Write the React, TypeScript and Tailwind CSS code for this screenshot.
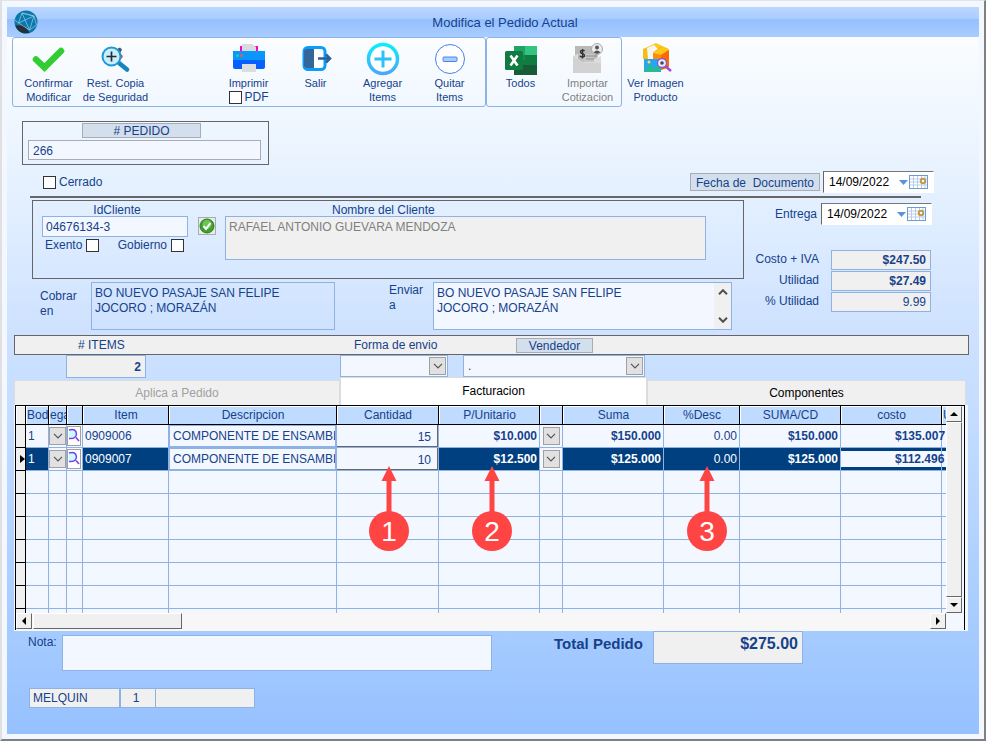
import React from 'react';
import clsx from 'clsx';

interface Row {
  bodega: string;
  item: string;
  descripcion: string;
  cantidad: string;
  precio: string;
  suma: string;
  desc: string;
  sumaCd: string;
  costo: string;
  selected?: boolean;
}

const rows: Row[] = [
  {
    bodega: '1',
    item: '0909006',
    descripcion: 'COMPONENTE DE ENSAMBLE',
    cantidad: '15',
    precio: '$10.000',
    suma: '$150.000',
    desc: '0.00',
    sumaCd: '$150.000',
    costo: '$135.007',
  },
  {
    bodega: '1',
    item: '0909007',
    descripcion: 'COMPONENTE DE ENSAMBLE',
    cantidad: '10',
    precio: '$12.500',
    suma: '$125.000',
    desc: '0.00',
    sumaCd: '$125.000',
    costo: '$112.496',
    selected: true,
  },
];

const columns = [
  { label: '', width: 'w-[10px]' },
  { label: 'Bod', width: 'w-[23px]' },
  { label: 'ega', width: 'w-[18px]' },
  { label: '', width: 'w-[16px]' },
  { label: 'Item', width: 'w-[86px]' },
  { label: 'Descripcion', width: 'w-[168px]' },
  { label: 'Cantidad', width: 'w-[102px]' },
  { label: 'P/Unitario', width: 'w-[101px]' },
  { label: '', width: 'w-[23px]' },
  { label: 'Suma', width: 'w-[101px]' },
  { label: '%Desc', width: 'w-[76px]' },
  { label: 'SUMA/CD', width: 'w-[101px]' },
  { label: 'costo', width: 'w-[101px]' },
  { label: 'Util', width: 'w-[30px]' },
];

const markers = [
  { n: '1', left: 'left-[354px]' },
  { n: '2', left: 'left-[457px]' },
  { n: '3', left: 'left-[672px]' },
];

function Globe() {
  return (
    <svg width="24" height="24" viewBox="0 0 24 24">
      <circle cx="12" cy="12" r="11.5" fill="#0b78ad" />
      <path d="M1.200 15.500l8-.5 6.500 7.500Q12 24 8 22.700 3 20.500 1.200 15.500z" fill="#26303c" />
      <path
        d="M8 3L4.500 13l11 7L20 6zM8 3l12 3M4.500 13L20 6M8 3l7.500 17M20 6l2.500 9-7 5M4.500 13L1 10"
        fill="none"
        stroke="#8cc4dd"
        strokeWidth=".8"
      />
    </svg>
  );
}

function CheckIcon() {
  return (
    <svg width="34" height="32" viewBox="0 0 34 32">
      <path d="M4 16.500l8.500 8L29 8" fill="none" stroke="#32cd32" strokeWidth="6.500" strokeLinecap="round" strokeLinejoin="miter" />
    </svg>
  );
}

function RestoreIcon() {
  return (
    <svg width="34" height="32" viewBox="0 0 34 32">
      <path d="M18 6l3-1.500 2 2-1.500 3z" fill="#45566b" />
      <circle cx="21.500" cy="13.500" r="2.200" fill="#f04438" />
      <path d="M20 20l8 6.500" stroke="#1585bd" strokeWidth="4.500" strokeLinecap="round" />
      <circle cx="12.500" cy="13.500" r="9" fill="#c9eefa" stroke="#1a9ad3" strokeWidth="2" />
      <path d="M12.500 8.500v10M7.500 13.500h10" stroke="#1f2d3a" strokeWidth="1.700" />
    </svg>
  );
}

function PrinterIcon() {
  return (
    <svg width="34" height="32" viewBox="0 0 34 32">
      <path d="M8 3h18v6H8z" fill="#ff00c8" />
      <path d="M10 1h10l4 3v5H10z" fill="#d9dade" />
      <path d="M1 8h32v10H1z" fill="#0a97fb" />
      <path d="M1 17h32v7a2 2 0 0 1-2 2H3a2 2 0 0 1-2-2z" fill="#0560ff" />
      <circle cx="5.500" cy="12.500" r="1.500" fill="#2fc3a0" />
      <circle cx="9.500" cy="12.500" r="1.500" fill="#f4574c" />
      <path d="M10 21h14v8H10z" fill="#dcdde1" />
    </svg>
  );
}

function ExitIcon() {
  return (
    <svg width="32" height="32" viewBox="0 0 32 32">
      <rect x="4" y="4.500" width="21" height="22" rx="4" fill="#fff" stroke="#0b9dfb" strokeWidth="3" />
      <path d="M4 9q0-3 3-3h7v19H7q-3 0-3-3z" fill="#336699" />
      <path d="M18 15.500h12M26 11.500l4 4-4 4" fill="none" stroke="#2b6196" strokeWidth="2.500" />
    </svg>
  );
}

function AddIcon() {
  return (
    <svg width="34" height="34" viewBox="0 0 34 34">
      <defs>
        <linearGradient id="add" x1="0" y1="0" x2="0" y2="1">
          <stop offset="0" stopColor="#08eefb" />
          <stop offset="1" stopColor="#4ba6fc" />
        </linearGradient>
      </defs>
      <circle cx="17" cy="17" r="14.500" fill="#fff" stroke="url(#add)" strokeWidth="3.500" />
      <path d="M15.500 8.500h3v7h7v3h-7v7h-3v-7h-7v-3h7z" fill="#2bc2fb" />
    </svg>
  );
}

function RemoveIcon() {
  return (
    <svg width="32" height="34" viewBox="0 0 32 34">
      <circle cx="16" cy="17" r="14.500" fill="#fff" stroke="#3f83f0" />
      <rect x="9" y="15" width="14" height="4.500" rx="1" fill="#a9cbff" stroke="#4587ee" />
    </svg>
  );
}

function ExcelIcon() {
  return (
    <svg width="34" height="34" viewBox="0 0 34 34">
      <path d="M10 4h11v10H10z" fill="#21a366" />
      <path d="M21 4h12v10H21z" fill="#33c481" />
      <path d="M10 13h23v10H10z" fill="#107c41" />
      <path d="M10 13h11v5H10z" fill="#178a4c" />
      <path d="M10 23h23v10H10z" fill="#185c37" />
      <rect x="1" y="9" width="18" height="19" rx="1.500" fill="#107c41" />
      <path d="M6.500 13.500l7 10M13.500 13.500l-7 10" stroke="#fff" strokeWidth="2.600" />
    </svg>
  );
}

function ImportIcon() {
  return (
    <svg width="36" height="34" viewBox="0 0 36 34">
      <path d="M5 4h22v19H5z" fill="#b9b9b9" />
      <path d="M3 14l5-2v8h16v-3l7-3v17H3z" fill="#dcdcdc" />
      <path d="M3 14l12 7h16v10H3z" fill="#d2d2d2" />
      <path d="M8 12h16v8H14z" fill="#c6c6c6" />
      <path d="M16 14h12M16 17h8" stroke="#8e8e8e" />
      <path d="M14.500 9.200c-1-1.500-4.500-1-4 1s4 1.200 4 3.200-4 2-4.500.3M12.500 7v9.500" fill="none" stroke="#333" strokeWidth="1.400" />
      <circle cx="27" cy="7" r="5.500" fill="#ececec" stroke="#aaa" />
      <circle cx="27" cy="5.500" r="2" fill="#555" />
      <path d="M23.500 10.500q3.500-4 7 0L27 12z" fill="#555" />
    </svg>
  );
}

function ImageIcon() {
  return (
    <svg width="34" height="34" viewBox="0 0 34 34">
      <path d="M4 7l13-6 13 6-9 5z" fill="#ffc91a" />
      <path d="M4 7l5-1 2 11H4z" fill="#f5bd12" />
      <path d="M8 6l7-3 4 4-6 4-1 6h-3z" fill="#f5f5f5" />
      <path d="M14 11l8-6 8 3v17l-8 3-8-8z" fill="#ff8a0c" />
      <path d="M14 11l9-6 7 3-8 5z" fill="#ffc91a" />
      <path d="M22 13l8-5v17l-8 3z" fill="#ff6a00" />
      <path d="M5 17h17v13H5z" fill="#28a4f5" />
      <path d="M5 28l6-6 4 4 3-3 4 4v3H5z" fill="#26bb98" />
      <circle cx="10" cy="20" r="1.500" fill="#ffde59" />
      <path d="M26 24l6 5" stroke="#a44ad0" strokeWidth="2.500" />
      <circle cx="23" cy="21" r="4.500" fill="#e6eefb" stroke="#8f55c9" strokeWidth="1.300" />
      <circle cx="23" cy="21" r="1.800" fill="#3d4b63" />
    </svg>
  );
}

function Chevron() {
  return (
    <svg width="10" height="6" viewBox="0 0 10 6">
      <path d="M1 .8l4 4 4-4" fill="none" stroke="#555" strokeWidth="1.200" />
    </svg>
  );
}

function Lens() {
  return (
    <svg width="12" height="16" viewBox="0 0 12 16">
      <path d="M1 2q7-2 7.500 4Q8 11 1 10z" fill="#c9fbff" />
      <path d="M1 2q7-2 7.500 4Q8 11 1 10.500M8 9.500l3 3.500" fill="none" stroke="#7c3aed" strokeWidth="1.500" />
    </svg>
  );
}

function Calendar() {
  return (
    <svg width="19" height="14" viewBox="0 0 19 14">
      <rect x=".5" y=".5" width="18" height="13" fill="#fff" stroke="#6b9bd8" />
      <path d="M4.500 1v12M8.500 1v12M12.500 1v12M16 1v12M1 4h17M1 7h17M1 10h17" stroke="#b9cdea" />
      <circle cx="14" cy="6" r="2.200" fill="#fff" stroke="#c19a4b" strokeWidth="2" />
    </svg>
  );
}

interface ToolProps {
  icon: React.ReactNode;
  lines: string[];
  disabled?: boolean;
}

function Tool({ icon, lines, disabled }: ToolProps) {
  return (
    <button
      disabled={disabled}
      className={clsx('flex w-[67px] flex-col items-center whitespace-nowrap text-[11px] leading-[14px]', disabled && 'text-[#808080]')}
    >
      <span className="flex h-[34px] items-center">{icon}</span>
      {lines.map((line) => (
        <span key={line}>{line}</span>
      ))}
    </button>
  );
}

function Check({ id, label, before }: { id: string; label: string; before?: boolean }) {
  const box = <input id={id} type="checkbox" className="h-[13px] w-[13px] appearance-none border border-[#333] bg-white" />;
  return (
    <div className={clsx('flex h-[14px] items-center', before ? 'gap-1' : 'gap-[3px]')}>
      {!before && box}
      <label htmlFor={id}>{label}</label>
      {before && box}
    </div>
  );
}

function DateBox({ id }: { id: string }) {
  return (
    <div className="flex h-[22px] w-[111px] items-center border border-b-white border-l-[#666] border-r-white border-t-[#777] bg-white text-black">
      <input id={id} defaultValue="14/09/2022" className="h-4 w-[75px] pl-[5px] outline-none" />
      <button aria-label="Abrir calendario" className="flex items-center gap-px">
        <svg width="9" height="5" viewBox="0 0 9 5">
          <path d="M0 0h9L4.500 5z" fill="#5b93d9" />
        </svg>
        <Calendar />
      </button>
    </div>
  );
}

function Amount({ id, label, value, bold }: { id: string; label: string; value: string; bold?: boolean }) {
  return (
    <div className="flex h-[21px] items-center justify-end">
      <label htmlFor={id} className="mr-[12px]">{label}</label>
      <input
        id={id}
        readOnly
        value={value}
        className={clsx('h-5 w-[100px] border border-[#8db2e3] bg-[#f0f0f0] pr-1 text-right', bold && 'font-bold')}
      />
    </div>
  );
}

function Combo({ id, label, value, className }: { id: string; label: string; value: string; className: string }) {
  return (
    <div className={clsx('relative h-[22px]', className)}>
      <select id={id} aria-label={label} className="h-full w-full appearance-none border border-[#8db2e3] bg-[#f3f7ff] px-1">
        <option>{value}</option>
      </select>
      <span className="pointer-events-none absolute right-0.5 top-0.5 flex h-[18px] w-[17px] items-center justify-center border border-[#a0a0a0] bg-[#e1e1e1]">
        <Chevron />
      </span>
    </div>
  );
}

function DropButton({ label }: { label: string }) {
  return (
    <button aria-label={label} className="mx-auto flex h-[18px] w-[17px] items-center justify-center border border-[#a0a0a0] bg-[#e1e1e1]">
      <Chevron />
    </button>
  );
}

function ArrowButton({ label, d }: { label: string; d: string }) {
  return (
    <button
      aria-label={label}
      className="flex h-4 w-4 shrink-0 items-center justify-center border border-b-[#666] border-l-white border-r-[#666] border-t-white bg-[#f0f0f0]"
    >
      <svg width="8" height="8" viewBox="0 0 8 8">
        <path d={d} fill="#000" />
      </svg>
    </button>
  );
}

function ItemsTable() {
  return (
    <table className="w-[956px] table-fixed border-separate border-spacing-0">
      <thead>
        <tr className="h-[19px]">
          {columns.map((c, i) => (
            <th
              key={i}
              className={clsx(
                c.width,
                'h-[19px] overflow-hidden border-b border-r border-black p-0 font-normal leading-[17px]',
                i === 0 ? 'bg-[#f0f0f0]' : 'bg-[#bfdbff]',
              )}
            >
              <div className={clsx('h-[18px] overflow-hidden border-l border-t border-white', (c.label.length === 3 || c.label === 'Util') && 'text-left')}>
                {c.label}
              </div>
            </th>
          ))}
        </tr>
      </thead>
      <tbody className="[&_td]:h-[23px] [&_td]:border-b [&_td]:border-r [&_td]:border-[#8db2e3] [&_td]:p-0 [&_td:first-child]:border-black [&_td:first-child]:bg-[#f0f0f0]">
        {rows.map((r) => {
          const dark = r.selected && 'bg-[#004080] text-white';
          return (
            <tr key={r.item}>
              <td>
                {r.selected && (
                  <svg className="ml-1" width="5" height="8" viewBox="0 0 5 8">
                    <path d="M0 0l5 4-5 4z" fill="#000" />
                  </svg>
                )}
              </td>
              <td className={clsx(dark)}><span className="pl-0.5">{r.bodega}</span></td>
              <td><DropButton label="Bodega" /></td>
              <td>
                <button aria-label="Buscar item" className="flex h-5 w-[14px] items-center border border-[#a0a0a0] bg-white">
                  <Lens />
                </button>
              </td>
              <td className={clsx(dark)}><span className="pl-0.5">{r.item}</span></td>
              <td>
                <input
                  aria-label="Descripcion"
                  defaultValue={r.descripcion}
                  className="block h-[22px] w-full border border-[#8db2e3] pl-[3px] outline-none"
                />
              </td>
              <td>
                <input
                  aria-label="Cantidad"
                  defaultValue={r.cantidad}
                  className="block h-[22px] w-full border-b border-r border-[#666] pr-[6px] pt-0.5 text-right outline-none"
                />
              </td>
              <td className={clsx(dark, 'text-right font-bold')}><span className="pr-0.5">{r.precio}</span></td>
              <td><DropButton label="Precios" /></td>
              <td className={clsx(dark, 'text-right font-bold')}><span className="pr-0.5">{r.suma}</span></td>
              <td className={clsx(dark, 'text-right')}><span className="pr-0.5">{r.desc}</span></td>
              <td className={clsx(dark, 'text-right font-bold')}><span className="pr-0.5">{r.sumaCd}</span></td>
              <td className={clsx(r.selected && 'bg-[#004080]', 'whitespace-nowrap font-bold')}>
                <div className={clsx('h-4 pl-[54px] leading-4', r.selected && 'bg-[#f3f7ff]')}>{r.costo}</div>
              </td>
              <td className={clsx(r.selected && 'bg-[#004080]')}>
                <div className={clsx('h-4', r.selected && 'bg-[#f3f7ff]')} />
              </td>
            </tr>
          );
        })}
        {[0, 1, 2, 3, 4, 5, 6].map((n) => (
          <tr key={n}>
            {columns.map((_, i) => (
              <td key={i} />
            ))}
          </tr>
        ))}
      </tbody>
    </table>
  );
}

export default function App() {
  return (
    <div className="flex min-h-screen flex-col border-b-2 border-l-2 border-r-2 border-t border-b-[#808080] border-l-[#e0e0e0] border-r-[#808080] border-t-[#e3e3e3] bg-[#f3f7ff] pb-[5px] pl-[5px] pr-[5px] pt-[6px] font-['Liberation_Sans',Arial,sans-serif] text-[12px] leading-[15px] text-[#15428b]">
      <header className="flex h-[30px] items-center bg-[linear-gradient(#bbd7ff_0%,#a9ccff_40%,#94bfff_42%,#a9cdff_100%)] pl-[7px]">
        <Globe />
        <h1 className="flex-1 pr-[7px] text-center text-[13px]">Modifica el Pedido Actual</h1>
      </header>

      <main className="flex-1 bg-[linear-gradient(#fbfdff_0%,#e7f2ff_20%,#d0e3ff_40%,#c3dcff_55%,#a4caff_87%,#96c1ff_100%)]">
        <div className="flex h-[70px] pl-[5px]">
          <div className="flex rounded-[3px] border border-[#8db2e3] px-0.5 pt-1">
            <Tool icon={<CheckIcon />} lines={['Confirmar', 'Modificar']} />
            <Tool icon={<RestoreIcon />} lines={['Rest. Copia', 'de Seguridad']} />
            <div className="ml-[66px] flex flex-col items-center">
              <Tool icon={<PrinterIcon />} lines={['Imprimir']} />
              <Check id="pdf" label="PDF" />
            </div>
            <Tool icon={<ExitIcon />} lines={['Salir', '\u00a0']} />
            <Tool icon={<AddIcon />} lines={['Agregar', 'Items']} />
            <Tool icon={<RemoveIcon />} lines={['Quitar', 'Items']} />
          </div>
          <div className="flex rounded-[3px] border border-[#8db2e3] pt-1">
            <Tool icon={<ExcelIcon />} lines={['Todos', '\u00a0']} />
            <Tool icon={<ImportIcon />} lines={['Importar', 'Cotizacion']} disabled />
          </div>
          <div className="flex pt-[5px]">
            <Tool icon={<ImageIcon />} lines={['Ver Imagen', 'Producto']} />
          </div>
        </div>

        <div className="ml-[15px] mt-[14px] h-[44px] w-[247px] border border-[#666] px-[5px] pt-px">
          <label htmlFor="pedido" className="ml-[54px] block h-[15px] w-[119px] border border-[#a8adb5] bg-[#d3dfec] text-center leading-[14px]">
            # PEDIDO
          </label>
          <input id="pedido" defaultValue="266" className="mt-0.5 block h-5 w-[233px] border border-[#a8adb5] bg-[#f3f7ff] px-1 pt-0.5" />
        </div>

        <div className="mt-[6px] flex h-[22px] items-center justify-between pl-[36px] pr-[45px]">
          <Check id="cerrado" label="Cerrado" />
          <div className="flex items-center gap-[3px]">
            <label htmlFor="fecha" className="h-[18px] w-[130px] whitespace-pre border border-[#a8adb5] bg-[#d3dfec] text-center leading-[18px]">
              {'Fecha de  Documento'}
            </label>
            <DateBox id="fecha" />
          </div>
        </div>
        <hr className="ml-[23px] mr-[58px] mt-[3px] border-t-2 border-[#666]" />

        <div className="ml-[25px] mr-[47px] mt-0.5 flex">
          <div className="flex-1">
            <div className="flex h-[79px] border border-[#666] pl-[9px] pr-[37px] pt-[2px]">
              <div className="w-[146px]">
                <label htmlFor="cliente" className="block h-[13px] pl-1 text-center">IdCliente</label>
                <input id="cliente" defaultValue="04676134-3" className="block h-[21px] w-full border border-[#8db2e3] bg-[#f3f7ff] px-[3px]" />
                <div className="mt-px flex justify-between pl-[3px] pr-1">
                  <Check id="exento" label="Exento" before />
                  <Check id="gobierno" label="Gobierno" before />
                </div>
              </div>
              <button aria-label="Validar cliente" className="ml-[10px] mr-[9px] mt-[14px] h-[18px] w-[18px] shrink-0 border border-[#a8adb5] bg-[#e6ece6]">
                <svg width="16" height="16" viewBox="0 0 16 16">
                  <circle cx="8" cy="8" r="7" fill="#3fa02e" stroke="#2c7d20" />
                  <circle cx="8" cy="6.500" r="4.500" fill="#6cc455" />
                  <path d="M4.500 8l2.500 3 4.500-6" fill="none" stroke="#fff" strokeWidth="2" />
                </svg>
              </button>
              <div className="flex-1">
                <label htmlFor="nombre" className="ml-[107px] block h-[13px]">Nombre del Cliente</label>
                <textarea
                  id="nombre"
                  readOnly
                  value="RAFAEL ANTONIO GUEVARA MENDOZA"
                  className="block h-[44px] w-full resize-none border border-[#8db2e3] bg-[#f0f0f0] px-[3px] pt-[3px] text-[#808080]"
                />
              </div>
            </div>
            <div className="mr-3 mt-[3px] flex h-[48px] pl-2">
              <label htmlFor="cobrar" className="w-[51px] pr-2 pt-[7px]">Cobrar en</label>
              <textarea
                id="cobrar"
                defaultValue={'BO NUEVO PASAJE SAN FELIPE\nJOCORO ; MORAZÁN'}
                className="block w-[244px] resize-none border border-[#8db2e3] px-[3px] pt-[3px]"
              />
              <label htmlFor="enviar" className="ml-[54px] w-[44px] pr-2 pt-px">Enviar a</label>
              <div className="flex flex-1 border border-[#8db2e3] bg-[#f3f7ff]">
                <textarea
                  id="enviar"
                  defaultValue={'BO NUEVO PASAJE SAN FELIPE\nJOCORO ; MORAZÁN'}
                  className="block flex-1 resize-none overflow-hidden px-[3px] pt-[3px]"
                />
                <div className="flex w-[17px] flex-col items-center justify-between bg-[#f0f0f0] py-[6px]">
                  <svg width="10" height="6" viewBox="0 0 10 6">
                    <path d="M1 5.200l4-4 4 4" fill="none" stroke="#505050" strokeWidth="2" />
                  </svg>
                  <svg width="10" height="6" viewBox="0 0 10 6">
                    <path d="M1 .8l4 4 4-4" fill="none" stroke="#505050" strokeWidth="2" />
                  </svg>
                </div>
              </div>
            </div>
          </div>

          <div className="w-[188px] pt-[3px]">
            <div className="flex items-center justify-end gap-1">
              <label htmlFor="entrega">Entrega</label>
              <DateBox id="entrega" />
            </div>
            <div className="mt-6 pr-px">
              <Amount id="costo" label="Costo + IVA" value="$247.50" bold />
              <Amount id="utilidad" label="Utilidad" value="$27.49" bold />
              <Amount id="pct" label="% Utilidad" value="9.99" />
            </div>
          </div>
        </div>

        <div className="ml-[7px] mr-[10px] mt-[5px] grid h-5 grid-cols-[325px_123px_1fr] items-center border border-[#666] bg-[#f0f0f0]">
          <label htmlFor="items" className="pl-[63px]">#&nbsp;ITEMS</label>
          <label htmlFor="envio" className="pl-[14px]">Forma de envio</label>
          <label htmlFor="vendedor" className="ml-[53px] h-[15px] w-[77px] border border-[#a8adb5] bg-[#d3dfec] text-center leading-[14px]">
            Vendedor
          </label>
        </div>
        <div className="ml-[7px] grid h-[22px] grid-cols-[326px_123px_1fr]">
          <input id="items" readOnly value="2" className="ml-[52px] h-[23px] w-20 border border-[#8db2e3] bg-[#f0f0f0] pr-1 text-right font-bold" />
          <Combo id="envio" label="Forma de envio" value="" className="w-[108px]" />
          <Combo id="vendedor" label="Vendedor" value="." className="w-[182px]" />
        </div>

        <div role="tablist" className="relative ml-[7px] mr-[13px] grid grid-cols-[326fr_307fr_319fr] items-end">
          <button role="tab" disabled className="h-[25px] border border-b-0 border-[#dcdcdc] bg-[#f0f0f0] text-[#a0a0a0]">
            Aplica a Pedido
          </button>
          <button role="tab" aria-selected="true" className="h-7 border border-b-0 border-[#dcdcdc] bg-white text-black">
            Facturacion
          </button>
          <button role="tab" className="h-[25px] border border-b-0 border-[#dcdcdc] bg-[#f0f0f0] text-black">
            Componentes
          </button>
        </div>

        <section className="relative ml-[7px] mr-[11px] border-l border-r-[3px] border-[#f3f7ff] bg-[#f3f7ff] pb-px">
          <div className="border-l border-r border-t border-black">
            <div className="flex h-[207px]">
              <div className="min-w-0 flex-1 overflow-hidden">
                <ItemsTable />
              </div>
              <div className="mr-0.5 flex w-4 shrink-0 flex-col border-[#666]">
                <ArrowButton label="Subir" d="M0 6h8L4 2z" />
                <div className="flex-1 border border-b-[#666] border-l-white border-r-[#666] border-t-white bg-[#f0f0f0]" />
                <ArrowButton label="Bajar" d="M0 2h8L4 6z" />
              </div>
            </div>
            <div className="mr-[18px] flex h-[17px] bg-[#f7f7f7]">
              <ArrowButton label="Izquierda" d="M6 0v8L2 4z" />
              <div className="ml-px h-4 w-[149px] border border-b-[#666] border-l-white border-r-[#666] border-t-white bg-[#f0f0f0]" />
              <div className="flex-1" />
              <ArrowButton label="Derecha" d="M2 0v8l4-4z" />
            </div>
          </div>
          {markers.map((m) => (
            <div key={m.n} className={clsx('pointer-events-none absolute top-[61px] flex w-10 flex-col items-center', m.left)}>
              <svg width="16" height="46" viewBox="0 0 16 46">
                <path d="M8 0l7.500 15h-5v31h-5V15h-5z" fill="#ff4444" />
              </svg>
              <span className="-mt-px flex h-10 w-10 items-center justify-center rounded-full bg-[#ff4444] text-[28px] text-white">{m.n}</span>
            </div>
          ))}
        </section>

        <div className="flex pl-[21px]">
          <label htmlFor="nota" className="w-[34px] pt-1">Nota:</label>
          <textarea id="nota" className="mt-1 block h-9 w-[430px] resize-none border border-[#8db2e3] bg-[#f3f7ff]" />
          <label htmlFor="total" className="ml-[62px] w-[99px] pt-[5px] text-[15px]/[16px] font-bold">Total Pedido</label>
          <input
            id="total"
            readOnly
            value="$275.00"
            className="h-[33px] w-[150px] border border-[#8db2e3] bg-[#f0f0f0] pb-2 pr-1 text-right text-[16px] font-bold"
          />
        </div>
        <div className="mt-[17px] flex pl-[22px]">
          <input aria-label="Usuario" readOnly value="MELQUIN" className="h-5 w-[91px] border border-[#8db2e3] bg-[#f0f0f0] px-[3px]" />
          <input aria-label="Caja" readOnly value="1" className="h-5 w-[36px] border border-[#8db2e3] bg-[#f0f0f0] pr-1 text-center" />
          <input aria-label="Referencia" readOnly className="h-5 w-[99px] border border-l-0 border-[#8db2e3] bg-[#f0f0f0]" />
        </div>
      </main>
    </div>
  );
}
